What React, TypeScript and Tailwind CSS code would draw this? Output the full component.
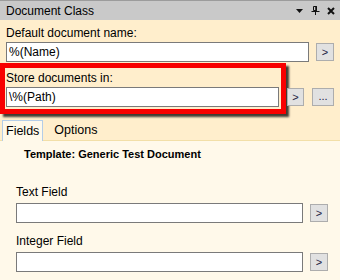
import React from "react";

function SmallButton({ label = ">", className = "" }: { label?: string; className?: string }) {
  return (
    <button
      type="button"
      className={`flex h-[18px] shrink-0 items-center justify-center border border-[#adadad] bg-[#e1e1e1] text-[11px] leading-none text-[#202040] ${className}`}
    >
      {label}
    </button>
  );
}

function TextBox({ value = "", className = "" }: { value?: string; className?: string }) {
  return (
    <div
      className={`flex h-[20px] shrink-0 items-center border border-[#7a7a7a] bg-white pl-[2px] text-[12px] ${className}`}
    >
      {value}
    </div>
  );
}

export default function App() {
  return (
    <div className="h-[280px] w-[340px] overflow-hidden bg-[#ffeecc] font-['Liberation_Sans',Arial,sans-serif] text-[12px] text-black">
      {/* title bar */}
      <div className="flex h-[20px] items-center border-t border-[#9c9c9c] bg-[#c9c9c9] pl-[6px] pr-[5px]">
        <span className="flex-1 text-[12px]">Document Class</span>
        <div className="flex items-center gap-[7px]">
          <svg width="7" height="4" viewBox="0 0 7 4">
            <path d="M0 0h7L3.5 4z" fill="#111" />
          </svg>
          <svg width="9" height="9" viewBox="0 0 9 9" className="ml-[1px]">
            <path d="M2.5 0.5h3v4h-3z" fill="none" stroke="#111" />
            <path d="M5 0v5" stroke="#111" strokeWidth="1.5" />
            <path d="M0.5 5.5h8" stroke="#111" />
            <path d="M4.5 5.5v3.5" stroke="#111" />
          </svg>
          <svg width="8" height="8" viewBox="0 0 8 8">
            <path d="M1 1l6 6M7 1l-6 6" stroke="#111" strokeWidth="2" />
          </svg>
        </div>
      </div>

      {/* default name */}
      <div className="px-[6px]">
        <div className="mt-[5px] mb-[1px] leading-[16px]">Default document name:</div>
        <div className="flex items-center">
          <TextBox value="%(Name)" className="w-[303px]" />
          <SmallButton className="ml-[7px] w-[18px]" />
        </div>
      </div>

      {/* store location, highlighted */}
      <div className="mt-[1px] flex items-end">
        <div className="w-[286px] border-[5px] border-[#f80000] pb-[2px] pl-[1px] shadow-[3px_3px_2px_rgba(0,0,0,0.75)]">
          <div className="mb-[1px] pt-[2px] leading-[16px]">Store documents in:</div>
          <TextBox value="\%(Path)" className="w-[273px]" />
        </div>
        <SmallButton className="mb-[8px] ml-[1px] w-[17px]" />
        <SmallButton label="..." className="mb-[8px] ml-[8px] w-[22px] items-end pb-[3px] text-[10px]" />
      </div>

      {/* tabs */}
      <div className="mt-[6px] flex h-[20px] items-end pl-[2px] text-[12.5px]">
        <div className="relative z-10 -mb-[1px] flex h-[21px] items-center border border-b-0 border-[#b4cde8] bg-[#fff9ea] px-[3px]">
          Fields
        </div>
        <div className="flex h-[20px] items-center pl-[11px]">Options</div>
      </div>

      {/* tab body */}
      <div className="h-[140px] border-t border-[#f2dfa8] bg-[#fff9ea] px-[16px]">
        <div className="pl-[8px] pt-[5px] text-[11px] font-bold leading-[16px]">
          Template: Generic Test Document
        </div>
        <div className="mt-[22px] mb-[3px] leading-[16px]">Text Field</div>
        <div className="flex items-center">
          <TextBox className="w-[287px]" />
          <SmallButton className="ml-[7px] w-[18px]" />
        </div>
        <div className="mt-[10px] mb-[3px] leading-[16px]">Integer Field</div>
        <div className="flex items-center">
          <TextBox className="w-[287px]" />
          <SmallButton className="ml-[7px] w-[18px]" />
        </div>
      </div>
    </div>
  );
}
